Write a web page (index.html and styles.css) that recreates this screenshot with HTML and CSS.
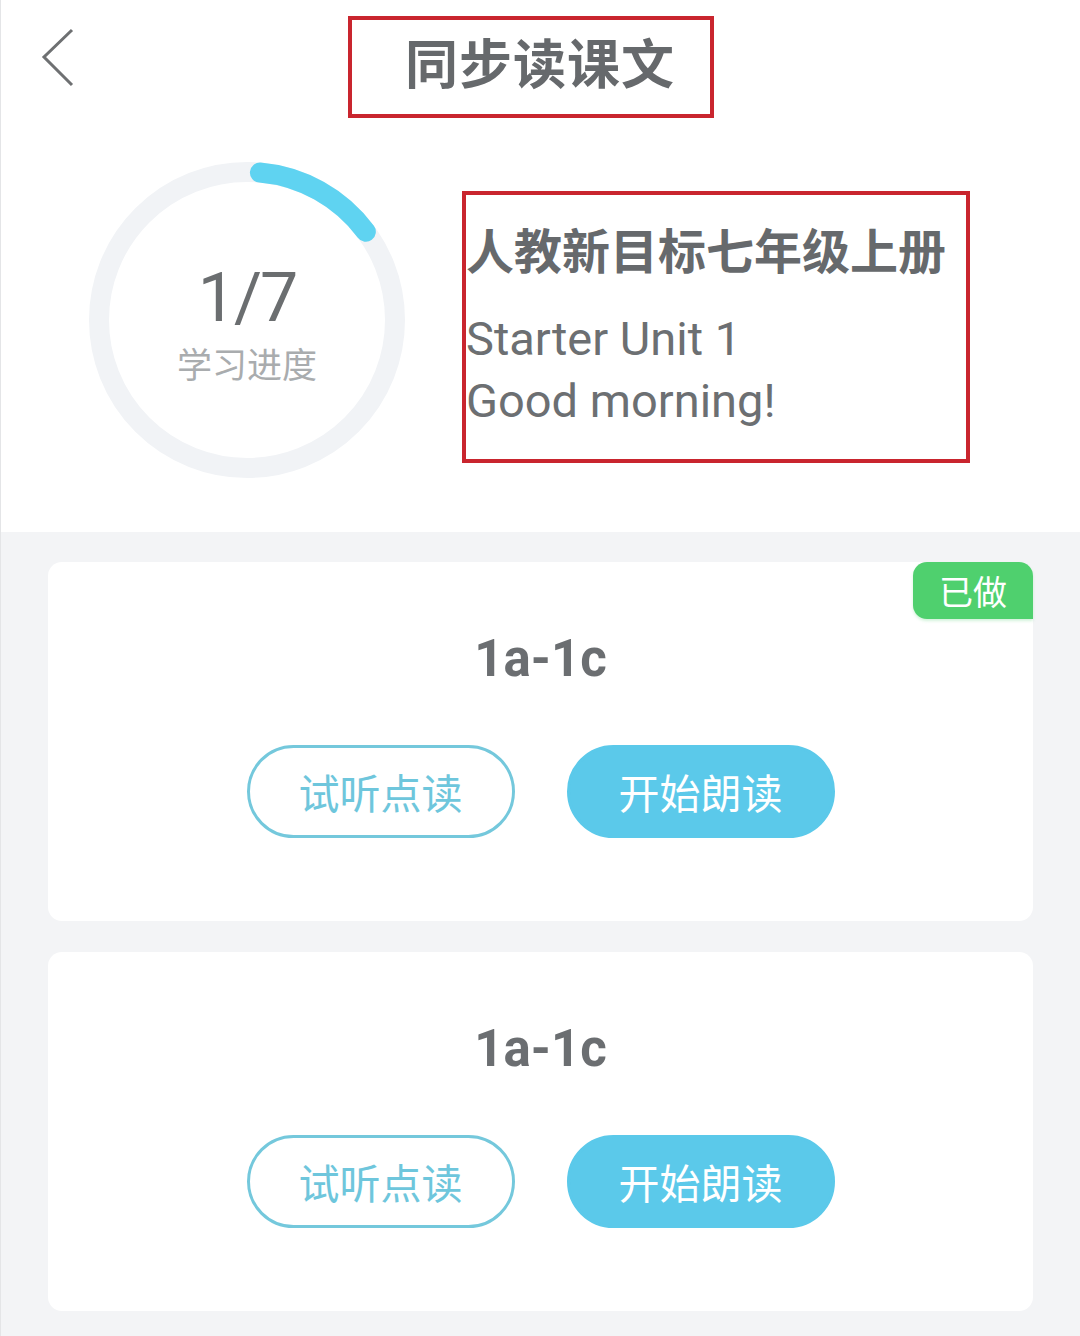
FILE: index.html
```html
<!DOCTYPE html>
<html lang="zh-CN">
<head>
<meta charset="utf-8">
<title>同步读课文</title>
<link rel="stylesheet" href="styles.css">
</head>
<body>
<div class="page">
  <header class="topbar">
    <div class="topbar-left">
      <svg class="back" width="34" height="60" viewBox="0 0 34 60" aria-label="返回">
        <path d="M31 2 L3 29 L31 57" fill="none" stroke="#6e7072" stroke-width="3" stroke-linejoin="miter"/>
      </svg>
    </div>
    <h1 class="title-box">同步读课文</h1>
    <div></div>
  </header>

  <section class="summary">
    <div class="ring">
      <svg width="316" height="316" viewBox="0 0 316 316">
        <circle cx="158" cy="158" r="148" fill="none" stroke="#f1f3f6" stroke-width="20"/>
        <circle cx="158" cy="158" r="148" fill="none" stroke="#5fd3f1" stroke-width="20"
                stroke-linecap="round" stroke-dasharray="125 930" transform="rotate(-85 158 158)"/>
      </svg>
      <div class="ring-label">
        <div class="ring-count">1/7</div>
        <div class="ring-caption">学习进度</div>
      </div>
    </div>
    <div class="info-box">
      <h2 class="book">人教新目标七年级上册</h2>
      <p class="unit">Starter Unit 1<br>Good morning!</p>
    </div>
  </section>

  <main class="list">
    <article class="card">
      <span class="badge">已做</span>
      <h3 class="card-title">1a-1c</h3>
      <div class="actions">
        <button class="btn btn-outline">试听点读</button>
        <button class="btn btn-fill">开始朗读</button>
      </div>
    </article>
    <article class="card">
      <h3 class="card-title">1a-1c</h3>
      <div class="actions">
        <button class="btn btn-outline">试听点读</button>
        <button class="btn btn-fill">开始朗读</button>
      </div>
    </article>
  </main>
</div>
</body>
</html>
```

FILE: styles.css
```css
* {
  box-sizing: border-box;
}

html, body {
  margin: 0;
  padding: 0;
}

body {
  width: 1080px;
  height: 1336px;
  overflow: hidden;
  background: #f3f4f6;
  font-family: Roboto, "Noto Sans CJK SC", sans-serif;
  color: #6a6d70;
}

.page {
  border-left: 1px solid #e4e5e7;
  min-height: 1336px;
}

/* top bar */
.topbar {
  background: #fff;
  height: 136px;
  display: grid;
  grid-template-columns: 1fr auto 1fr;
  align-items: start;
  padding-right: 19px;
}

.topbar-left {
  padding: 28px 0 0 40px;
}

.back {
  display: block;
}

.title-box {
  margin: 16px 0 0;
  width: 366px;
  height: 102px;
  border: 4px solid #c9252e;
  display: flex;
  align-items: center;
  justify-content: center;
  padding: 0 0 12px 18px;
  font-family: "Noto Sans CJK SC", sans-serif;
  font-size: 53px;
  font-weight: 700;
  color: #66696c;
  letter-spacing: 1px;
}

/* progress + book info */
.summary {
  background: #fff;
  height: 396px;
  display: flex;
  align-items: flex-start;
  padding: 26px 0 0 88px;
}

.ring {
  position: relative;
  width: 316px;
  height: 316px;
  flex: none;
}

.ring svg {
  display: block;
}

.ring-label {
  position: absolute;
  inset: 0;
  display: flex;
  flex-direction: column;
  align-items: center;
  padding-top: 96px;
}

.ring-count {
  font-family: Roboto, sans-serif;
  font-size: 68px;
  line-height: 80px;
  letter-spacing: -2px;
  color: #6b6e70;
}

.ring-caption {
  font-family: "Noto Sans CJK SC", sans-serif;
  font-size: 35px;
  line-height: 44px;
  margin-top: 3px;
  color: #a9acae;
}

.info-box {
  margin: 29px 0 0 57px;
  width: 508px;
  height: 272px;
  border: 4px solid #c9252e;
  padding: 22px 0 0 0;
}

.book {
  margin: 0;
  font-family: "Noto Sans CJK SC", sans-serif;
  font-size: 48px;
  line-height: 62px;
  font-weight: 700;
  color: #66696c;
  white-space: nowrap;
}

.unit {
  margin: 29px 0 0;
  font-family: Roboto, sans-serif;
  font-size: 47px;
  line-height: 62px;
  color: #6c6f72;
}

/* lesson cards */
.list {
  display: flex;
  flex-direction: column;
  gap: 31px;
  padding: 30px 47px 0 47px;
}

.card {
  position: relative;
  background: #fff;
  border-radius: 14px;
  height: 359px;
  display: flex;
  flex-direction: column;
  align-items: center;
  padding-top: 66px;
}

.badge {
  position: absolute;
  top: 0;
  right: 0;
  width: 120px;
  height: 57px;
  background: #4fd06e;
  border-radius: 14px 14px 0 14px;
  color: #fff;
  font-family: "Noto Sans CJK SC", sans-serif;
  font-size: 34px;
  line-height: 57px;
  text-align: center;
  box-shadow: 0 2px 3px rgba(79, 208, 110, 0.25);
}

.card-title {
  margin: 0;
  font-family: Roboto, sans-serif;
  font-size: 51px;
  line-height: 62px;
  font-weight: 700;
  color: #6b6e71;
}

.actions {
  display: flex;
  gap: 52px;
  margin-top: 55px;
}

.btn {
  width: 268px;
  height: 93px;
  border-radius: 47px;
  font-family: "Noto Sans CJK SC", sans-serif;
  font-size: 41px;
  line-height: 1;
  padding: 0;
  cursor: pointer;
}

.btn-outline {
  background: #fff;
  border: 3px solid #74c8dc;
  color: #6ec6dc;
}

.btn-fill {
  background: #5bc9ea;
  border: 3px solid #5bc9ea;
  color: #fff;
}
```
